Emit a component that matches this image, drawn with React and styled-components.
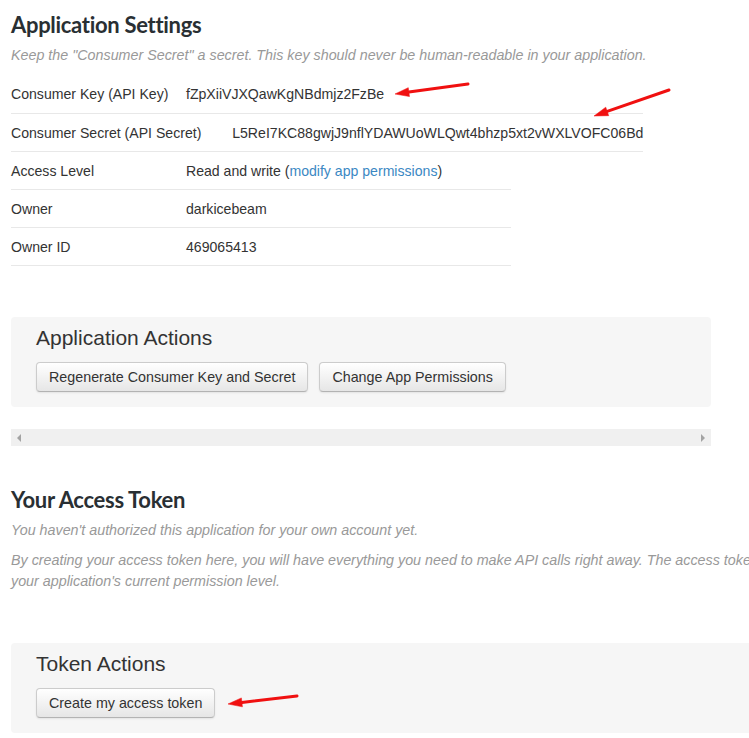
import React from "react";
import styled, { createGlobalStyle } from "styled-components";

const Global = createGlobalStyle`
  html, body { margin: 0; padding: 0; background: #fff; overflow: hidden; }
  body { font-family: "Liberation Sans", Arial, sans-serif; color: #333; }
`;

const Page = styled.div`
  position: relative;
  padding: 12px 0 0 11px;
  width: 1000px;
`;

const PageTitle = styled.h2`
  margin: 0;
  font-family: Lato, "Open Sans", sans-serif;
  font-weight: 700;
  font-size: 22px;
  line-height: 26px;
  letter-spacing: -0.3px;
  color: #292f33;
  margin-top: ${(p) => p.$top || 0}px;
`;

const Note = styled.p`
  margin: ${(p) => p.$top || 0}px 0 0;
  font-style: italic;
  font-size: 14.3px;
  line-height: 21px;
  color: #999;
  width: ${(p) => p.$width || "auto"};
`;

const Table = styled.div`
  width: ${(p) => p.$width}px;
  margin-top: ${(p) => p.$top || 0}px;
  border-top: ${(p) => (p.$bordered ? "1px solid #e8e8e8" : "none")};
`;

const Row = styled.div`
  display: grid;
  grid-template-columns: 35% 1fr;
  align-items: center;
  height: 38px;
  box-sizing: border-box;
  border-bottom: ${(p) => (p.$plain ? "none" : "1px solid #e8e8e8")};
  font-size: 14.1px;
  color: #333;
`;

const Link = styled.a`
  color: #3b88c3;
  text-decoration: none;
`;

const Panel = styled.div`
  width: ${(p) => p.$width}px;
  margin-top: ${(p) => p.$top}px;
  background: #f6f6f6;
  border-radius: 4px;
  padding: 9px 25px 15px;
  box-sizing: border-box;
`;

const PanelTitle = styled.h3`
  margin: 0;
  font-family: "Liberation Sans", Arial, sans-serif;
  font-weight: 400;
  font-size: 21px;
  line-height: 24px;
  color: #333;
`;

const Buttons = styled.div`
  display: flex;
  gap: 11px;
  margin-top: 12px;
`;

const Button = styled.button`
  font-family: "Liberation Sans", Arial, sans-serif;
  font-size: 14.3px;
  line-height: 17px;
  color: #333;
  padding: 5px 12px 5px;
  height: 30px;
  border: 1px solid #ccc;
  border-bottom-color: #b3b3b3;
  border-radius: 4px;
  background: linear-gradient(#ffffff, #e6e6e6);
  box-shadow: 0 1px 2px rgba(0, 0, 0, 0.08);
  cursor: pointer;
`;

const ScrollBar = styled.div`
  width: 700px;
  height: 17px;
  margin-top: 22px;
  background: #f0f0f0;
  display: flex;
  align-items: center;
  justify-content: space-between;
  padding: 0 6px;
  box-sizing: border-box;
`;

const Tri = styled.span`
  width: 0;
  height: 0;
  border-top: 4px solid transparent;
  border-bottom: 4px solid transparent;
  ${(p) =>
    p.$dir === "left"
      ? "border-right: 4px solid #a3a3a3;"
      : "border-left: 4px solid #a3a3a3;"}
`;

const Overlay = styled.svg`
  position: absolute;
  left: 0;
  top: 0;
  width: 749px;
  height: 738px;
  pointer-events: none;
`;

function Arrow({ x1, y1, x2, y2 }) {
  const dx = x2 - x1;
  const dy = y2 - y1;
  const len = Math.hypot(dx, dy);
  const ux = dx / len;
  const uy = dy / len;
  const hl = 14;
  const hw = 4.5;
  const bx = x2 - ux * hl;
  const by = y2 - uy * hl;
  const px = -uy;
  const py = ux;
  return (
    <g fill="#f01010" stroke="#f01010">
      <line x1={x1} y1={y1} x2={bx} y2={by} strokeWidth="3" strokeLinecap="round" />
      <polygon
        strokeWidth="0.5"
        points={`${x2},${y2} ${bx + px * hw},${by + py * hw} ${bx - px * hw},${by - py * hw}`}
      />
    </g>
  );
}

export default function App() {
  return (
    <>
      <Global />
      <Page>
        <PageTitle>Application Settings</PageTitle>
        <Note $top={7}>
          Keep the "Consumer Secret" a secret. This key should never be human-readable in your application.
        </Note>

        <Table $width={500} $top={9}>
          <Row $plain>
            <span>Consumer Key (API Key)</span>
            <span>fZpXiiVJXQawKgNBdmjz2FzBe</span>
          </Row>
        </Table>
        <Table $width={632} $bordered>
          <Row>
            <span>Consumer Secret (API Secret)</span>
            <span>L5ReI7KC88gwjJ9nflYDAWUoWLQwt4bhzp5xt2vWXLVOFC06Bd</span>
          </Row>
        </Table>
        <Table $width={500}>
          <Row>
            <span>Access Level</span>
            <span>
              Read and write (<Link href="#">modify app permissions</Link>)
            </span>
          </Row>
          <Row>
            <span>Owner</span>
            <span>darkicebeam</span>
          </Row>
          <Row>
            <span>Owner ID</span>
            <span>469065413</span>
          </Row>
        </Table>

        <Panel $width={700} $top={51}>
          <PanelTitle>Application Actions</PanelTitle>
          <Buttons>
            <Button>Regenerate Consumer Key and Secret</Button>
            <Button>Change App Permissions</Button>
          </Buttons>
        </Panel>

        <ScrollBar>
          <Tri $dir="left" />
          <Tri $dir="right" />
        </ScrollBar>

        <PageTitle $top={41}>Your Access Token</PageTitle>
        <Note $top={7}>You haven't authorized this application for your own account yet.</Note>
        <Note $top={9} $width="940px">
          By creating your access token here, you will have everything you need to make API calls right away. The access token generated will be assigned your application's current permission level.
        </Note>

        <Panel $width={960} $top={51}>
          <PanelTitle>Token Actions</PanelTitle>
          <Buttons>
            <Button>Create my access token</Button>
          </Buttons>
        </Panel>

        <Overlay viewBox="0 0 749 738">
          <Arrow x1={468} y1={84} x2={395} y2={94} />
          <Arrow x1={669} y1={90} x2={594} y2={116} />
          <Arrow x1={297} y1={696} x2={228} y2={704} />
        </Overlay>
      </Page>
    </>
  );
}
